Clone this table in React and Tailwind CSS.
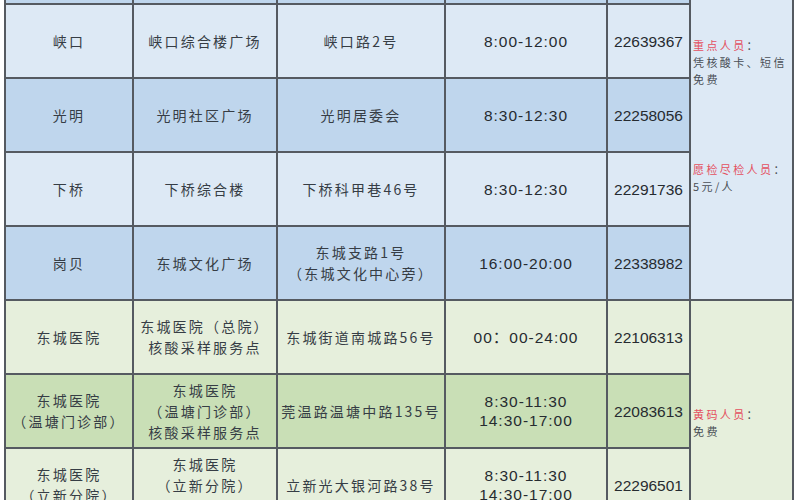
import React from "react";

const LIGHT_BLUE = "bg-[#dde9f5]";
const MID_BLUE = "bg-[#bfd6ed]";
const LIGHT_GREEN = "bg-[#e6efdc]";
const MID_GREEN = "bg-[#c9dfb6]";

const rows = [
  { bg: LIGHT_BLUE, cells: [["峡口"], ["峡口综合楼广场"], ["峡口路2号"], ["8:00-12:00"], ["22639367"]] },
  { bg: MID_BLUE, cells: [["光明"], ["光明社区广场"], ["光明居委会"], ["8:30-12:30"], ["22258056"]] },
  { bg: LIGHT_BLUE, cells: [["下桥"], ["下桥综合楼"], ["下桥科甲巷46号"], ["8:30-12:30"], ["22291736"]] },
  {
    bg: MID_BLUE,
    cells: [["岗贝"], ["东城文化广场"], ["东城支路1号", "（东城文化中心旁）"], ["16:00-20:00"], ["22338982"]],
  },
  {
    bg: LIGHT_GREEN,
    cells: [
      ["东城医院"],
      ["东城医院（总院）", "核酸采样服务点"],
      ["东城街道南城路56号"],
      ["00：00-24:00"],
      ["22106313"],
    ],
  },
  {
    bg: MID_GREEN,
    cells: [
      ["东城医院", "（温塘门诊部）"],
      ["东城医院", "（温塘门诊部）", "核酸采样服务点"],
      ["莞温路温塘中路135号"],
      ["8:30-11:30", "14:30-17:00"],
      ["22083613"],
    ],
  },
  {
    bg: LIGHT_GREEN,
    cells: [
      ["东城医院", "（立新分院）"],
      ["东城医院", "（立新分院）", "核酸采样服务点"],
      ["立新光大银河路38号"],
      ["8:30-11:30", "14:30-17:00"],
      ["22296501"],
    ],
  },
];

const cjk = { fontFamily: '"Noto Sans CJK SC", sans-serif' };
const num = { fontFamily: '"Liberation Sans", "Noto Sans CJK SC", sans-serif' };

const Cell = ({ bg, lines, kind }) => {
  const isNum = kind === "time" || kind === "phone";
  return (
    <div className={`${bg} flex flex-col items-center justify-center overflow-hidden text-center`}>
      {lines.map((l, i) => (
        <div
          key={i}
          style={isNum ? num : cjk}
          className={
            isNum
              ? `text-[15.5px] leading-[19px] text-[#262b30] whitespace-nowrap ${kind === "time" ? "tracking-[1px]" : ""}`
              : "text-[14px] leading-[21px] tracking-[2.2px] text-[#363d45] whitespace-nowrap"
          }
        >
          {l}
        </div>
      ))}
    </div>
  );
};

const kinds = ["cjk", "cjk", "cjk", "time", "phone"];

const App = () => {
  return (
    <div className="h-[500px] w-[800px] overflow-hidden bg-white">
      <div className="ml-[4px] grid w-fit grid-cols-[126px_142px_166px_160px_81px_101px] grid-rows-[3px_repeat(7,72px)] gap-[2px] bg-[#555a61] px-[2px]">
        {/* remark: blue section */}
        <div
          style={cjk}
          className="col-start-6 row-span-5 row-start-1 bg-[#dde9f5] pl-[2px] pt-[37px] text-[11px] leading-[17px] tracking-[2.4px] text-[#4a4f55]"
        >
          <div>
            <span className="text-[#e4505f]">重点人员</span>：
          </div>
          <div>凭核酸卡、短信</div>
          <div>免费</div>
          <div className="mt-[73px]">
            <span className="text-[#e4505f]">愿检尽检人员</span>：
          </div>
          <div>5元/人</div>
        </div>

        {/* remark: green section */}
        <div
          style={cjk}
          className="col-start-6 row-span-3 row-start-6 bg-[#e6efdc] pl-[2px] pt-[105px] text-[11px] leading-[17px] tracking-[2.4px] text-[#4a4f55]"
        >
          <div>
            <span className="text-[#e4505f]">黄码人员</span>：
          </div>
          <div>免费</div>
        </div>

        {/* top strip of the previous row */}
        {[0, 1, 2, 3, 4].map((i) => (
          <div key={`t${i}`} className={MID_BLUE} />
        ))}

        {rows.map((r, ri) =>
          r.cells.map((c, ci) => <Cell key={`${ri}-${ci}`} bg={r.bg} lines={c} kind={kinds[ci]} />)
        )}
      </div>
    </div>
  );
};

export default App;
